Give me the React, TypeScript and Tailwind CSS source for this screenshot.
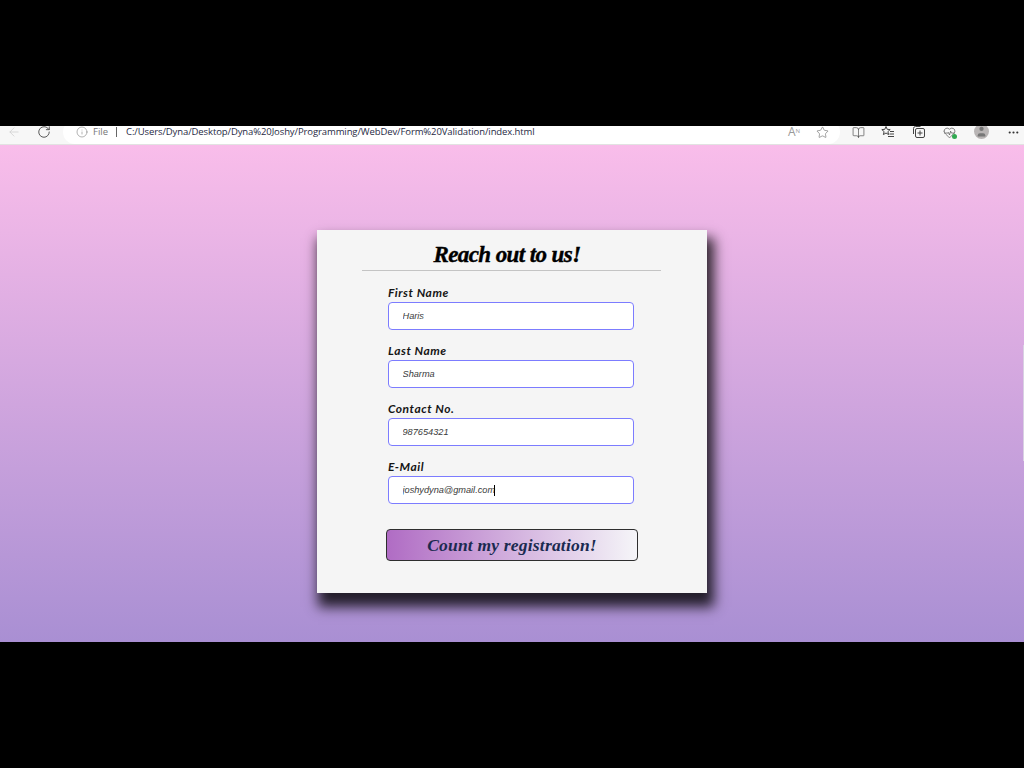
import { ArrowLeft, RotateCw, Info, Star, BookOpen, Ellipsis, HeartPulse, User } from 'lucide-react'

const fields = [
  { label: 'First Name', value: 'Haris' },
  { label: 'Last Name', value: 'Sharma' },
  { label: 'Contact No.', value: '987654321' },
  { label: 'E-Mail', value: 'joshydyna@gmail.com', focused: true },
]

function FavoritesIcon() {
  return (
    <svg width="14" height="14" viewBox="0 0 14 14" fill="none" stroke="#444" strokeWidth="1" className="ml-[16px] -mt-[6px]">
      <path d="M5 1.5l1.2 2.8 3 .3-2.3 2 .7 3L5 8l-2.6 1.6.7-3-2.3-2 3-.3z" />
      <path d="M9 6.5h4M8.5 9h4.500M7 11.500h6" />
    </svg>
  )
}

function CollectionsIcon() {
  return (
    <svg width="14" height="14" viewBox="0 0 14 14" fill="none" stroke="#444" strokeWidth="1" className="ml-[17px] -mt-[6px]">
      <path d="M1.500 9V3.500a2 2 0 0 1 2-2h5" />
      <rect x="3.500" y="3.500" width="9" height="9" rx="1.500" />
      <path d="M8 5.500v5M5.500 8h5" />
    </svg>
  )
}

function Toolbar() {
  return (
    <div className="relative flex h-[19px] shrink-0 items-center overflow-hidden border-b border-[#e2e2e2] bg-[#f7f7f7] font-['Open_Sans',sans-serif] text-[#555]">
      <ArrowLeft size={14} strokeWidth={1.2} className="ml-[7px] -mt-[7px] text-[#ccc]" />
      <RotateCw size={14} strokeWidth={1.5} className="ml-[16px] -mt-[7px] text-[#444]" />
      <div className="ml-[12px] -mt-[6px] flex h-[24px] w-[777px] items-center rounded-[12px] bg-white pl-[13px]">
        <Info size={12} strokeWidth={1} className="text-[#666]" />
        <span className="ml-[5px] text-[9.5px] text-[#777]">File</span>
        <span className="ml-[8px] h-[10px] w-px bg-[#666]" />
        <span className="ml-[9px] text-[9.5px] tracking-[-0.1px] whitespace-nowrap text-[#1f2a44]">
          C:/Users/Dyna/Desktop/Dyna%20Joshy/Programming/WebDev/Form%20Validation/index.html
        </span>
        <span className="ml-auto mr-[16px] text-[12px] text-[#999]">A<sup className="text-[6px]">N</sup></span>
        <Star size={13} strokeWidth={1} className="mr-[11px] text-[#555]" />
      </div>
      <BookOpen size={13} strokeWidth={1.2} className="ml-[12px] -mt-[6px] text-[#444]" />
      <FavoritesIcon />
      <CollectionsIcon />
      <div className="relative ml-[17px] -mt-[6px]">
        <HeartPulse size={13} strokeWidth={1.2} className="text-[#444]" />
        <span className="absolute -right-[1px] bottom-0 size-[5px] rounded-full bg-[#2fa84f]" />
      </div>
      <div className="ml-[18px] -mt-[7px] flex size-[15px] items-center justify-center overflow-hidden rounded-full bg-[#b9b5b5]">
        <User size={13} fill="#777" strokeWidth={0} />
      </div>
      <Ellipsis size={13} strokeWidth={2} className="ml-[18px] -mt-[5px] text-[#333]" />
    </div>
  )
}

export default function App() {
  return (
    <div className="flex h-[768px] w-[1024px] flex-col overflow-hidden bg-black">
      <div className="h-[126px] shrink-0" />
      <Toolbar />
      <main className="relative flex h-[497px] shrink-0 flex-col items-center bg-[linear-gradient(180deg,#f9bdea_0%,#a98fd3_100%)] pt-[85px]">
        <form className="flex h-[363px] w-[390px] flex-col items-center bg-[#f5f5f5] shadow-[4px_11px_12px_3px_rgba(0,0,0,0.8)]">
          <h1 className="-ml-[10px] mt-[9px] h-[31px] font-['Liberation_Serif',serif] text-[23px] leading-[31px] font-bold tracking-[-0.6px] text-black italic [-webkit-text-stroke:0.4px_black]">
            Reach out to us!
          </h1>
          <hr className="-ml-[2px] h-px w-[299px] border-0 bg-[#c4c4c4]" />
          <div className="mt-[14px] -ml-[2px] flex flex-col gap-[13px]">
            {fields.map((f) => (
              <div key={f.label} className="flex w-[246px] flex-col">
                <label className="h-[17px] font-['Lato',sans-serif] text-[12px] leading-[16px] font-bold tracking-[0.55px] text-[#151515] italic">
                  {f.label}
                </label>
                <div className="relative">
                  <input
                    readOnly
                    value={f.value}
                    className="block h-[28px] w-full rounded-[4px] border-[1.5px] border-[#7c7cff] bg-white pl-[13.5px] font-['Liberation_Sans',sans-serif] text-[9.2px] text-[#3a3a3a] italic outline-none"
                  />
                  {f.focused && <span className="absolute top-[9px] left-[106px] h-[11px] w-px bg-black" />}
                </div>
              </div>
            ))}
          </div>
          <button
            type="button"
            className="mt-[25px] h-[32px] w-[252px] rounded-[4px] border-[1.5px] border-[#2e2e2e] bg-[linear-gradient(90deg,#b06cc4_0%,#f5f5f8_100%)] font-['Liberation_Serif',serif] text-[17.5px] font-bold tracking-[0.2px] text-[#1b2a50] italic"
          >
            Count my registration!
          </button>
        </form>
        <div className="absolute top-[200px] right-0 h-[116px] w-[1px] bg-[#d8d0e2]" />
      </main>
      <div className="flex-1" />
    </div>
  )
}
